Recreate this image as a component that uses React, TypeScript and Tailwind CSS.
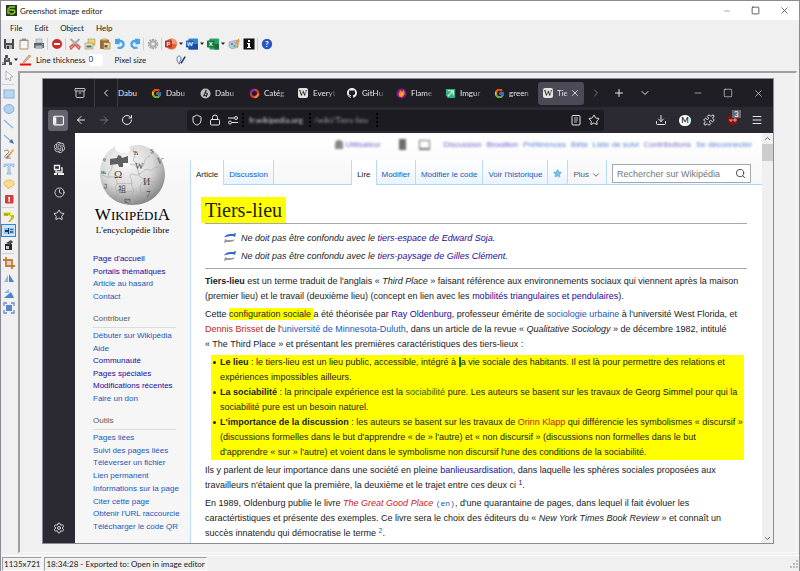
import type { ReactNode } from 'react';
import {
  Archive, ArrowLeft, ArrowRight, ChevronDown, ChevronLeft, ChevronRight, ChevronUp, Clock,
  Download, Lock, Menu, Minus, Plus, Puzzle, RotateCw, Search, Settings, Shield, Square, Star, X,
} from 'lucide-react';
import { FcGoogle } from 'react-icons/fc';
import { SiOpenai, SiGithub } from 'react-icons/si';

function Svg({ children, size = 12 }: { children: ReactNode; size?: number }) {
  return (
    <svg width={size} height={size} viewBox="0 0 12 12" fill="none" className="shrink-0">
      {children}
    </svg>
  );
}

/* ---------- Greenshot toolbar icons ---------- */

const SaveIcon = () => (
  <Svg>
    <path d="M1 1h10v10H2L1 10z" fill="#4a4a4e" />
    <path d="M3 1h6v4H3z" fill="#dfe3e8" />
    <path d="M3 7h6v4H3z" fill="#a9adb5" />
    <path d="M4 8h2v3H4z" fill="#3b3b3f" />
  </Svg>
);
const ClipboardIcon = () => (
  <Svg>
    <rect x="1.5" y="1.5" width="9" height="10" rx="1" fill="#b08a62" />
    <rect x="2.5" y="3" width="7" height="7.5" fill="#f4f6fa" />
    <rect x="4" y="0.5" width="4" height="2.2" fill="#8f959d" />
  </Svg>
);
const PrinterIcon = () => (
  <Svg>
    <path d="M3 1h6v4H3z" fill="#cfd8e4" stroke="#8a94a3" strokeWidth=".6" />
    <path d="M1 5h10v5H1z" fill="#5d636b" />
    <path d="M2.5 7.5h7V11h-7z" fill="#aeb6c1" />
    <path d="M9 6h1v1H9z" fill="#8be07a" />
  </Svg>
);
const StopIcon = () => (
  <Svg>
    <circle cx="6" cy="6" r="5" fill="#cf2a27" />
    <path d="M3 5h6v2H3z" fill="#fff" />
  </Svg>
);
const CutIcon = () => (
  <Svg>
    <path d="M1.5 1L9 8M10.5 1L3 8" stroke="#a6a6aa" strokeWidth="1.8" />
    <path d="M4 6l-3 3 1 2 4-4 4 4 1-2-3-3" stroke="#dd5a50" strokeWidth="1.5" />
  </Svg>
);
const CopyIcon = () => (
  <Svg>
    <path d="M4 1h7v6H4z" fill="#f6d262" stroke="#8a93a4" strokeWidth=".6" />
    <path d="M1 5h8v6H1z" fill="#fbe28b" stroke="#7f8ca0" strokeWidth=".6" />
    <path d="M2.5 7.5h5v2h-5z" fill="#3f6fb3" />
  </Svg>
);
const PasteIcon = () => (
  <Svg>
    <rect x="1" y="1.5" width="9" height="9.5" rx="1" fill="#9a6a38" />
    <path d="M3 .5h5v2H3z" fill="#d5b27a" />
    <path d="M4.5 4.5h6.5v6.5H4.5z" fill="#f3d57c" stroke="#806a44" strokeWidth=".6" />
    <path d="M5.5 7h3v2.5h-3z" fill="#4a5f86" />
  </Svg>
);
const UndoIcon = () => (
  <Svg>
    <path d="M4 3.500c4-1.500 6 1 5.500 3.500C9 9.500 6 10.500 3.500 9.500" stroke="#46a5e8" strokeWidth="2.400" />
    <path d="M1 1l5-.5-.5 6L1 6z" fill="#46a5e8" />
  </Svg>
);
const RedoIcon = () => (
  <Svg>
    <path d="M8 3.500C4 2 2 4.500 2.500 7c.5 2.500 3.500 3.500 6 2.500" stroke="#46a5e8" strokeWidth="2.400" />
    <path d="M11 1L6 .5l.5 6L11 6z" fill="#46a5e8" />
  </Svg>
);
const GearIcon = () => (
  <Svg>
    <circle cx="6" cy="6" r="4.5" stroke="#a3a3a6" strokeWidth="1.4" strokeDasharray="2 .8" />
    <circle cx="6" cy="6" r="3.3" fill="#c4c4c6" stroke="#9b9b9e" />
    <circle cx="6" cy="6" r="1.3" fill="#efefef" />
  </Svg>
);
const PowerPointIcon = () => (
  <Svg>
    <circle cx="6.5" cy="6" r="5.5" fill="#e2643c" />
    <path d="M6.5.5A5.5 5.5 0 0 1 12 6H6.5z" fill="#f09a76" />
    <rect x="0" y="2.5" width="7" height="7" rx=".8" fill="#b8371a" />
    <text x="1.5" y="8.2" fontSize="6" fontWeight="700" fill="#fff">P</text>
  </Svg>
);
const WordIcon = () => (
  <Svg>
    <rect x="2.5" y="0.5" width="9.5" height="11" rx=".8" fill="#2f87d8" />
    <path d="M2.5 6h9.5v5.5H2.5z" fill="#1a4f9f" />
    <rect x="0" y="2.5" width="7.5" height="7" rx=".8" fill="#1b5cbe" />
    <text x=".8" y="8.2" fontSize="6" fontWeight="700" fill="#fff">W</text>
  </Svg>
);
const ExcelIcon = () => (
  <Svg>
    <rect x="2.5" y="0.5" width="9.5" height="11" rx=".8" fill="#27a366" />
    <path d="M7.5 6h4.5v5.5H7.5z" fill="#176b3d" />
    <rect x="0" y="2.5" width="7.5" height="7" rx=".8" fill="#107c41" />
    <text x="1.7" y="8.2" fontSize="6" fontWeight="700" fill="#fff">X</text>
  </Svg>
);
const PaintIcon = () => (
  <Svg>
    <path d="M1 4l8-2 1 7-6 2-3-2z" fill="#a8cbe6" stroke="#78a1c5" strokeWidth=".6" />
    <circle cx="4" cy="6" r="1" fill="#d94c3a" />
    <circle cx="6.5" cy="8" r="1" fill="#58a846" />
    <path d="M7 6l4-5M9 10l2-8" stroke="#e7933b" strokeWidth="1.3" />
  </Svg>
);
const InfoIcon = () => (
  <Svg>
    <path d="M.5.5h11v11H.5z" fill="#111" />
    <path d="M5 2h2v2H5zM4 5h3v4h1v1H4V9h1V6H4z" fill="#fff" />
  </Svg>
);
const HelpIcon = () => (
  <Svg>
    <circle cx="6" cy="6" r="5.2" fill="#2c55c4" />
    <text x="4" y="9" fontSize="8" fontWeight="700" fill="#fff">?</text>
  </Svg>
);

function ToolButton({ label, children }: { label: string; children: ReactNode }) {
  return (
    <button aria-label={label} className="flex h-[15px] w-[15px] shrink-0 items-center justify-center">
      {children}
    </button>
  );
}

const Divider = () => <span className="mx-px h-3 w-px bg-[#cfcfcf]" />;

const Caret = () => (
  <svg width="6" height="4" viewBox="0 0 6 4" className="shrink-0"><path d="M1 0.5h4L3 3z" fill="#222" /></svg>
);

function TopBars() {
  return (
    <header>
      <div className="flex h-[19px] items-center bg-white pl-[5px]">
        <svg width="11" height="11" viewBox="0 0 11 11">
          <path d="M0 0h11v11H0z" fill="#2d3328" />
          <path d="M9 2H4L2 4v4h2M3 5h5l1 2-2 2H4" stroke="#86d815" strokeWidth="1.3" fill="none" />
        </svg>
        <h1 className="ml-[3px] flex-1">Greenshot image editor</h1>
        <button aria-label="Minimize" className="flex w-[29px] justify-center"><Minus size={8} color="#777" /></button>
        <button aria-label="Maximize" className="flex w-[29px] justify-center"><Square size={9} color="#333" /></button>
        <button aria-label="Close" className="flex w-[29px] justify-center"><X size={11} color="#333" strokeWidth={1.5} /></button>
      </div>
      <nav className="flex h-[15px] items-center gap-3 pl-[9px]">
        <button>File</button>
        <button>Edit</button>
        <button>Object</button>
        <button>Help</button>
      </nav>
      <div className="flex h-[17px] items-center">
        <ToolButton label="Save"><SaveIcon /></ToolButton>
        <ToolButton label="Copy to clipboard"><ClipboardIcon /></ToolButton>
        <ToolButton label="Print"><PrinterIcon /></ToolButton>
        <Divider />
        <ToolButton label="Delete"><StopIcon /></ToolButton>
        <Divider />
        <ToolButton label="Cut"><CutIcon /></ToolButton>
        <ToolButton label="Copy"><CopyIcon /></ToolButton>
        <ToolButton label="Paste"><PasteIcon /></ToolButton>
        <ToolButton label="Undo"><UndoIcon /></ToolButton>
        <ToolButton label="Redo"><RedoIcon /></ToolButton>
        <Divider />
        <ToolButton label="Settings"><GearIcon /></ToolButton>
        <Divider />
        <ToolButton label="PowerPoint"><PowerPointIcon /></ToolButton>
        <Caret />
        <ToolButton label="Word"><WordIcon /></ToolButton>
        <Caret />
        <ToolButton label="Excel"><ExcelIcon /></ToolButton>
        <Caret />
        <ToolButton label="Paint"><PaintIcon /></ToolButton>
        <ToolButton label="Imgur"><InfoIcon /></ToolButton>
        <Divider />
        <ToolButton label="Help"><HelpIcon /></ToolButton>
      </div>
      <div className="flex h-[16px] items-center">
        <button aria-label="Obfuscation mode" className="flex w-[18px] items-center">
          <Svg>
            <path d="M4 1h3v3h2v4h2v3H8V8H5v3H1V8h2V4h1z" fill="#555" />
            <path d="M5 4h2v2H5zM1 8h2v2H1z" fill="#aaa" />
          </Svg>
          <Caret />
        </button>
        <button aria-label="Line color" className="ml-px">
          <Svg>
            <path d="M3 8L9 1l2 1-7 7z" fill="#e2b184" stroke="#a9764c" strokeWidth=".5" />
            <path d="M0 9.5h11v2H0z" fill="#f00" />
          </Svg>
        </button>
        <label htmlFor="thickness" className="ml-1">Line thickness</label>
        <input id="thickness" defaultValue="0" className="ml-[3px] h-[12px] w-[14px] bg-white pb-[2px]" />
        <span className="ml-[12px]">Pixel size</span>
        <button aria-label="Blur" className="ml-[30px]">
          <Svg size={10}>
            <path d="M2 2c2-2 4 0 4 2S4 9 4 11C2 9 0 5 2 2z" stroke="#5b6f95" strokeWidth="1.2" />
            <path d="M11 2L6 10" stroke="#243e73" strokeWidth="2" />
          </Svg>
        </button>
      </div>
    </header>
  );
}

/* ---------- drawing tools on the left ---------- */

function DrawTools() {
  return (
    <div className="flex w-[17px] shrink-0 flex-col items-start">
      <ToolButton label="Select">
        <Svg><path d="M3 1v9l2-2 2 3 1-1-1-3h3z" fill="#fff" stroke="#999" strokeWidth=".7" /></Svg>
      </ToolButton>
      <span className="my-px ml-px h-px w-3 bg-[#cfcfcf]" />
      <ToolButton label="Rectangle">
        <Svg><rect x="1" y="2" width="10" height="8" fill="#bcd5ee" stroke="#88afd6" /></Svg>
      </ToolButton>
      <ToolButton label="Ellipse">
        <Svg><ellipse cx="6" cy="6" rx="5" ry="4.5" fill="#b3d0ec" stroke="#88afd6" /></Svg>
      </ToolButton>
      <ToolButton label="Line">
        <Svg><path d="M1 2l9 8" stroke="#8fb3da" strokeWidth="1.3" /></Svg>
      </ToolButton>
      <ToolButton label="Arrow">
        <Svg><path d="M1 2l7 6" stroke="#8fb3da" strokeWidth="1.3" /><path d="M6 9l5 2-2-5z" fill="#3f74ad" /></Svg>
      </ToolButton>
      <ToolButton label="Freehand">
        <Svg>
          <path d="M1 3c4-2 7 0 3 3s-3 5 4 4" stroke="#7c8b9b" />
          <path d="M4 8l6-7 1 1-5 7z" fill="#e0a23e" />
          <path d="M3 9l2-1 1 1-2 1z" fill="#c33" />
        </Svg>
      </ToolButton>
      <ToolButton label="Text">
        <Svg><path d="M1 1h10v3h-1L9 2.5H7V10h1v1H4v-1h1V2.5H3L2 4H1z" fill="#c2dbf2" stroke="#79a6d3" strokeWidth=".6" /></Svg>
      </ToolButton>
      <ToolButton label="Speech bubble">
        <Svg><path d="M6 2c3 0 5 1.500 5 3.500S9 9 7 9l-2 2V9C3 9 1 7.500 1 5.500S3 2 6 2z" fill="#fbdd8c" stroke="#d8a94b" strokeWidth=".7" /></Svg>
      </ToolButton>
      <ToolButton label="Counter">
        <Svg><rect x="2" y="2" width="8.5" height="8.5" rx="1" fill="#d93a3a" /><path d="M5 4h2v5H5.500V5H5z" fill="#fff" /></Svg>
      </ToolButton>
      <span className="my-px ml-px h-px w-3 bg-[#cfcfcf]" />
      <ToolButton label="Highlight">
        <Svg>
          <path d="M0 1h8v4H0z" fill="#f6ec2a" />
          <path d="M1 3h6M1 4h4" stroke="#6d6a2a" strokeWidth=".8" />
          <path d="M7 4h4v3l-4 4H5l3-4z" fill="#c5bd22" />
        </Svg>
      </ToolButton>
      <button aria-label="Obfuscate" className="flex h-[13px] w-[15px] items-center justify-center border border-[#2a8ad8] bg-[#cfe5f7]">
        <svg width="10" height="8" viewBox="0 0 10 8">
          <path d="M0 1h10v6H0z" fill="#8ec6ea" />
          <path d="M1 3h3V1h1v6H4V5H1z" fill="#173a63" />
          <path d="M6 2h3v1H6zM6 4h3v2H6z" fill="#3c70a8" />
        </svg>
      </button>
      <ToolButton label="Effects">
        <Svg>
          <path d="M2 5h7v6H2z" fill="#26282b" />
          <path d="M3 4l5-3 2 2-3 3z" fill="#4a4d50" />
          <path d="M3 7h3v3H3z" fill="#c7cbb8" />
        </Svg>
      </ToolButton>
      <span className="my-px ml-px h-px w-3 bg-[#cfcfcf]" />
      <ToolButton label="Crop">
        <Svg><path d="M3 0v9h9M0 3h9v9" stroke="#cc7a2c" strokeWidth="1.8" /><path d="M4 4h4v4H4z" fill="#cfd7e4" /></Svg>
      </ToolButton>
      <ToolButton label="Rotate left">
        <Svg><path d="M1 10l4-7v7z" fill="#8fb6e3" /><path d="M6 10V2l5 8z" fill="#4d82c9" /></Svg>
      </ToolButton>
      <ToolButton label="Rotate right">
        <Svg><path d="M1 6l5-4v4z" fill="#8fb6e3" /><path d="M1 11l7-6 3 6z" fill="#4d82c9" /></Svg>
      </ToolButton>
      <ToolButton label="Resize">
        <Svg>
          <path d="M3 3h6v6H3z" fill="#5488cf" />
          <path d="M1 4V1h3M8 1h3v3M11 8v3H8M4 11H1V8" stroke="#6a8cc0" strokeWidth="1.3" />
        </Svg>
      </ToolButton>
    </div>
  );
}

/* ---------- captured browser ---------- */

const WikiFavicon = () => (
  <span className="flex h-[10px] w-[10px] items-center justify-center rounded-[2px] bg-[#e4e4e4] font-['Liberation_Serif',serif] text-[9px] leading-none text-black">
    W
  </span>
);

const tabs: { title: string; icon: ReactNode }[] = [
  { title: 'Dabu', icon: <FcGoogle size={11} /> },
  {
    title: 'Dabu',
    icon: <Svg size={11}><circle cx="6" cy="6" r="5.5" fill="#bdbdbd" /><path d="M4 9L7 2M5 5l3 1-1 3-2-1" stroke="#222" strokeWidth="1.2" /></Svg>,
  },
  {
    title: 'Catég',
    icon: <Svg size={11}><circle cx="6" cy="6" r="4" stroke="#d93535" strokeWidth="2.5" /><path d="M6 2a4 4 0 0 0-4 4" stroke="#7b2bb0" strokeWidth="2.5" /><path d="M6 10a4 4 0 0 0 4-4" stroke="#e88a20" strokeWidth="2.5" /></Svg>,
  },
  { title: 'Everyt', icon: <WikiFavicon /> },
  { title: 'GitHu', icon: <SiGithub size={10} color="#f2f2f2" /> },
  {
    title: 'Flame',
    icon: <Svg size={11}><circle cx="6" cy="6" r="5.5" fill="#7d1694" /><path d="M3 8c-1-3 2-3 1-6 2 1 2 2 3 2l1-2c3 4 1 7-2 8-2 0-3-1-3-2z" fill="#f4801f" /><path d="M5 8c0-2 2-2 2-4 1 3 0 5-2 4z" fill="#ffd23c" /></Svg>,
  },
  {
    title: 'Imgur',
    icon: <Svg size={11}><path d="M1 1h10v10H3L1 8z" fill="#30b37f" /><path d="M3 3l6 0v5M3 9l5-5" stroke="#d8f5e8" strokeWidth="1.3" /></Svg>,
  },
  { title: 'green', icon: <FcGoogle size={11} /> },
];

function BrowserChrome() {
  return (
    <div className="text-[#e6e6ea]">
      <div className="flex h-[28px] items-center bg-[#1f1e25]">
        <button aria-label="Recent tabs" className="flex h-full w-[52px] shrink-0 items-center justify-end border-r border-[#3b3a43] pr-[8px]">
          <Archive size={12} color="#c4c4c8" />
        </button>
        <button aria-label="Scroll tabs left" className="flex h-full w-[23px] shrink-0 items-center justify-center border-r border-[#3b3a43]">
          <ChevronLeft size={12} />
        </button>
        <span className="w-[33px] shrink-0">Dabu</span>
        {tabs.map((t, i) => (
          <button key={i} className="flex w-[49px] shrink-0 items-center gap-1 whitespace-nowrap">
            <span className="w-[11px] shrink-0">{t.icon}</span>
            <span className="w-[24px] text-left [mask-image:linear-gradient(to_right,black_60%,transparent)]">{t.title}</span>
          </button>
        ))}
        <div className="-ml-[5px] flex h-[23px] w-[46px] shrink-0 items-center rounded-[3px] bg-[#4b4a56] pl-[5px]">
          <WikiFavicon />
          <span className="ml-1 w-[13px] [mask-image:linear-gradient(to_right,black_60%,transparent)]">Tie</span>
          <button aria-label="Close tab"><X size={10} /></button>
        </div>
        <button aria-label="Scroll tabs right" className="ml-[6px]"><ChevronRight size={12} color="#76757e" /></button>
        <button aria-label="New tab" className="ml-[11px]"><Plus size={12} /></button>
        <button aria-label="List all tabs" className="ml-[14px]"><ChevronDown size={12} /></button>
        <div className="ml-auto flex gap-[20px] pr-[9px]">
          <button aria-label="Minimize browser"><Minus size={10} strokeWidth={1.5} /></button>
          <button aria-label="Maximize browser"><Square size={10} strokeWidth={1.5} /></button>
          <button aria-label="Close browser"><X size={11} strokeWidth={1.5} /></button>
        </div>
      </div>
      <div className="flex h-[26px] items-center bg-[#2b2a33]">
        <button aria-label="Show sidebar" className="ml-[5px] flex h-[21px] w-[20px] items-center justify-center rounded-[3px] bg-[#65646f]">
          <Svg size={13}><rect x="1.5" y="2" width="9" height="8" rx="1" stroke="#fff" /><path d="M2 3h2v6H2z" fill="#fff" /></Svg>
        </button>
        <button aria-label="Back" className="ml-[7px]"><ArrowLeft size={12} /></button>
        <button aria-label="Forward" className="ml-[11px]"><ArrowRight size={12} color="#76757e" /></button>
        <button aria-label="Reload" className="ml-[11px]"><RotateCw size={12} /></button>
        <div className="ml-[54px] flex h-[21px] flex-1 items-center gap-[6px] rounded-[3px] bg-[#1c1b22] pl-[4px] pr-[4px]">
          <Shield size={12} />
          <Lock size={12} />
          <Svg size={12}><path d="M1 4h6M5 8.5h6" stroke="#e6e6ea" /><circle cx="9" cy="4" r="1.5" stroke="#e6e6ea" /><circle cx="3" cy="8.5" r="1.5" stroke="#e6e6ea" /></Svg>
          <div className="-ml-[3px] flex h-[14px] flex-1 items-center whitespace-nowrap">
            <div className="flex h-full w-[67px] items-center border-l-2 border-dotted border-black pl-[5px]">
              <span className="text-[#d7d7dc] blur-[1px]">fr.wikipedia.org</span>
            </div>
            <div className="flex h-full w-[69px] items-center border-x-2 border-dotted border-black pl-[3px]">
              <span className="text-[#9a99a1] blur-[1px]">/wiki/Tiers-lieu</span>
            </div>
          </div>
          <Svg size={12}><rect x="2" y="1.5" width="8" height="9.5" rx="1" stroke="#e6e6ea" /><path d="M4 4h4M4 6h4M4 8h3" stroke="#e6e6ea" strokeWidth=".8" /></Svg>
          <Star size={12} />
        </div>
        <div className="ml-[51px] flex w-[118px] items-center gap-3 pr-[10px]">
          <button aria-label="Downloads"><Download size={12} /></button>
          <button aria-label="Account" className="flex h-[11px] w-[12px] shrink-0 items-center justify-center rounded-full bg-white font-bold text-[#2b2a33]">M</button>
          <button aria-label="Extensions"><Puzzle size={12} /></button>
          <button aria-label="uBlock" className="relative">
            <Svg size={12}><path d="M6 1l5 1v5c0 2-3 4-5 4.500C4 11 1 9 1 7V2z" fill="#8b0f10" /><path d="M3 5v2h2V5M7 7h2V5H7z" stroke="#e8c9c9" strokeWidth=".8" /></Svg>
            <span className="absolute -top-[4px] left-[5px] bg-[#68686f] px-[2px] leading-[8px] text-white">3</span>
          </button>
          <button aria-label="Menu"><Menu size={12} /></button>
        </div>
      </div>
    </div>
  );
}

function BrowserSidebar() {
  return (
    <div className="flex w-[32px] shrink-0 flex-col items-center gap-[11px] bg-[#2b2a33] pb-[9px] pt-[9px] text-[#dcdce0]">
      <button aria-label="Chatbot"><SiOpenai size={11} /></button>
      <button aria-label="Synced tabs">
        <Svg>
          <path d="M1.5 1.5h5v4h-5z" stroke="#eee" strokeWidth="1.3" />
          <path d="M3 6v2h6V4H8" stroke="#eee" strokeWidth="1.3" />
          <path d="M1 9h3v2H1zM5 9h6v2H5z" fill="#eee" />
        </Svg>
      </button>
      <button aria-label="History"><Clock size={11} /></button>
      <button aria-label="Bookmarks"><Star size={12} /></button>
      <button aria-label="Customize" className="mt-auto"><Settings size={12} /></button>
    </div>
  );
}

/* ---------- Wikipédia ---------- */

function Globe() {
  return (
    <svg width="66" height="62" viewBox="0 0 66 62" fill="none">
      <defs>
        <radialGradient id="globe" cx=".4" cy=".3" r=".75">
          <stop offset="0" stopColor="#fafafa" />
          <stop offset=".55" stopColor="#d8d8d8" />
          <stop offset="1" stopColor="#7d7d7d" />
        </radialGradient>
      </defs>
      <path d="M16 2c-2 3 0 6 3 6 2 2 5 0 8 1 3 0 3-3 2-6 3-2 7-2 12-2 13 3 24 14 24 29 0 18-14 31-33 31S0 47 0 29C0 17 6 7 16 2z" fill="url(#globe)" />
      <path d="M10 15l7-1 1-3 3 1 1 2 6-2v7l-5 0 0 4-4 0-1-3-8 1z" fill="#5f5f5f" />
      <path d="M12 21c1 7-6 7-3 12 8-1 8 4 8 7 8-2 8 1 15-1 0-5-4-6-1-9 3-1 4 3 8 0-2-6-1-9-9-10M39 30c0 5 5 3 5 7-5 3-4 7-3 12M39 30c5-1 4-6 10-4 5 1 4-3 9-3M32 39c-2 5 4 5 1 9-2 5 1 9-1 12M17 40c-4 5 3 8-1 13M44 37c7-2 8 3 14 1M34 4c-3 4 3 5 0 10s7 5 8 9M42 23c4-4 1-9 8-11M1 32c3-2 5 2 8 1M16 47c7-3 9 3 16 0M41 49c5-2 7 2 12-1" stroke="#aaa" strokeWidth=".7" />
      <g fill="#454545" fontFamily="Liberation Serif, Noto Sans CJK JP, serif">
        <text x="14" y="34" fontSize="11">Ω</text>
        <text x="35" y="25" fontSize="9">W</text>
        <text x="43" y="41" fontSize="10">И</text>
        <text x="18" y="48" fontSize="8">祖</text>
        <text x="46" y="53" fontSize="9">7</text>
        <text x="57" y="20" fontSize="8">Ѵ</text>
        <text x="33" y="11" fontSize="7">Ћ</text>
        <text x="50" y="9" fontSize="7">Ş</text>
        <text x="3" y="17" fontSize="7">ę</text>
        <text x="1" y="30" fontSize="7">њ</text>
        <text x="24" y="58" fontSize="6">ლ</text>
        <text x="4" y="43" fontSize="6">უ</text>
      </g>
    </svg>
  );
}

function NavGroup({ title, links, listClass }: { title?: string; links: [string, boolean?][]; listClass: string }) {
  return (
    <div>
      {title && (
        <h3 className="mb-[2px] mr-[14px] border-b border-[#dcdcdc] pb-[2px] text-[#54595d]">{title}</h3>
      )}
      <ul className={listClass}>
        {links.map(([label, visited]) => (
          <li key={label}>
            <a href="#" className={visited ? 'text-[#1a0a9b]' : 'text-[#2058b8]'}>{label}</a>
          </li>
        ))}
      </ul>
    </div>
  );
}

function WikiSidebar() {
  return (
    <aside className="w-[115px] shrink-0 pt-[11px] font-['Liberation_Sans',Arial,sans-serif] leading-[12px]">
      <a href="#" className="flex w-[115px] flex-col items-center font-['Liberation_Serif',serif] text-black">
        <Globe />
        <span className="text-[17px] leading-[18px]">W<span className="text-[13px]">IKIPÉDI</span>A</span>
        <span className="text-[9px] leading-[10px]">L'encyclopédie libre</span>
      </a>
      <nav className="mt-[18px] flex flex-col gap-[10px] pl-[18px]">
        <NavGroup
          listClass="flex h-[50px] flex-col justify-between"
          links={[["Page d'accueil", true], ['Portails thématiques', true], ['Article au hasard'], ['Contact']]}
        />
        <NavGroup
          title="Contribuer"
          listClass="flex h-[75px] flex-col justify-between"
          links={[
            ['Débuter sur Wikipédia'], ['Aide'], ['Communauté', true], ['Pages spéciales', true],
            ['Modifications récentes', true], ['Faire un don'],
          ]}
        />
        <NavGroup
          title="Outils"
          listClass="flex h-[101px] flex-col justify-between"
          links={[
            ['Pages liées'], ['Suivi des pages liées'], ['Téléverser un fichier'], ['Lien permanent'],
            ['Informations sur la page'], ['Citer cette page'], ["Obtenir l'URL raccourcie"],
            ['Télécharger le code QR'],
          ]}
        />
      </nav>
    </aside>
  );
}

function PageTabs() {
  const tab = 'flex h-[24px] items-center border-r border-[#b9dcf4] bg-gradient-to-b from-white to-[#eaf4fc] px-[5px] pt-[6px] text-[#2058b8]';
  const open = 'flex h-[25px] items-center border-r border-[#b9dcf4] bg-white px-[5px] pt-[5px] text-[#202122]';
  return (
    <div className="flex h-[25px] items-start whitespace-nowrap border-b border-[#a7d7f9]">
      <div className="flex flex-1 items-start border-l border-[#b9dcf4] text-[8px]">
        <a href="#" className={open}>Article</a>
        <a href="#" className={tab}>Discussion</a>
        <div className="ml-auto flex items-start border-l border-[#b9dcf4]">
          <a href="#" className={open}>Lire</a>
          <a href="#" className={tab}>Modifier</a>
          <a href="#" className={tab}>Modifier le code</a>
          <a href="#" className={tab}>Voir l'historique</a>
          <a href="#" aria-label="Suivre" className={tab}>
            <Star size={9} fill="#79bdea" color="#5ba7dc" className="mb-1" />
          </a>
          <button className="flex h-[24px] items-center gap-[2px] border-r border-[#b9dcf4] px-[5px] pt-[6px] text-[8px] text-[#54595d]">
            Plus <ChevronDown size={10} />
          </button>
        </div>
      </div>
      <div className="ml-[5px] mr-[11px] mt-[4px] flex h-[19px] w-[139px] items-center border border-[#a2a9b1] bg-white px-1">
        <input aria-label="Rechercher" placeholder="Rechercher sur Wikipédia" className="min-w-0 flex-1 placeholder:text-[#72777d] focus:outline-none" />
        <button aria-label="Lancer la recherche"><Search size={11} color="#404244" /></button>
      </div>
    </div>
  );
}

function PersonalBar() {
  return (
    <div className="flex h-[27px] items-center justify-end gap-[5px] whitespace-nowrap pb-[4px] pr-[10px] text-[8px] text-[#5a82da]">
      <div className="flex items-center gap-[2px] text-[#7a68cc] blur-[1px]">
        <span className="h-[9px] w-[8px] rounded-t-full bg-[#888]" />
        <span className="w-[43px]">Utilisateur</span>
      </div>
      <span className="ml-[6px] h-[11px] w-[7px] bg-[#6d6d70] blur-[1px]" />
      <span className="ml-[8px] mr-[8px] h-[10px] w-[11px] border border-b-2 border-[#77777a] blur-[1px]" />
      <span className="text-[#7a68cc] blur-[1px]">Discussion</span>
      <span className="text-[#665cd0] blur-[1px]">Brouillon</span>
      <span className="blur-[1px]">Préférences</span>
      <span className="blur-[1px]">Bêta</span>
      <span className="blur-[1px]">Liste de suivi</span>
      <span className="text-[#7a68cc] blur-[1px]">Contributions</span>
      <span className="blur-[1px]">Se déconnecter</span>
    </div>
  );
}

function Hatnote({ children }: { children: ReactNode }) {
  return (
    <div className="flex h-[18px] items-center gap-[4px] pl-[18px] italic">
      <svg width="14" height="10" viewBox="0 0 14 10">
        <path d="M1 4.500C3 1 6 1 10 1l3-1-1 4-2-1C6 3 4 3.500 1 4.500z" fill="#3465c8" />
        <path d="M12 6.500C10 9 8 9 4 9l-3 1 1-4 2 1c4 0 5 0 8-.5z" fill="#9a9a9a" />
      </svg>
      <p>{children}</p>
    </div>
  );
}

const Seen = ({ children }: { children: ReactNode }) => <a href="#" className="text-[#1a0a9b]">{children}</a>;
const Link = ({ children }: { children: ReactNode }) => <a href="#" className="text-[#2058b8]">{children}</a>;
const Missing = ({ children }: { children: ReactNode }) => <a href="#" className="text-[#c8201c]">{children}</a>;

const Bullet = ({ children }: { children: ReactNode }) => (
  <li className="before:-ml-[7px] before:mr-[4px] before:inline-block before:h-[3px] before:w-[3px] before:rounded-full before:bg-[#202122] before:align-middle">
    {children}
  </li>
);

function Article() {
  return (
    <article className="flex-1 border-l border-[#b9dcf4] bg-white pb-[2px] pl-[14px] pr-[15px] pt-[12px]">
      <div className="border-b border-[#a2a9b1]">
        <h2 className="-ml-[4px] w-fit bg-[#ff0] px-[4px] font-['Liberation_Serif',Georgia,serif] text-[20px] leading-[26px]">Tiers-lieu</h2>
      </div>
      <div className="border-b border-[#a2a9b1] pb-[3px] pt-[5px]">
        <Hatnote>Ne doit pas être confondu avec le <Seen>tiers-espace de Edward Soja</Seen>.</Hatnote>
        <Hatnote>Ne doit pas être confondu avec le <Seen>tiers-paysage de Gilles Clément</Seen>.</Hatnote>
      </div>
      <div className="flex flex-col gap-[3px] whitespace-nowrap pt-[5px] leading-[15px]">
        <p>
          <b>Tiers-lieu</b> est un terme traduit de l'anglais « <i>Third Place</i> » faisant référence aux environnements sociaux qui viennent après la maison<br />
          (premier lieu) et le travail (deuxième lieu) (concept en lien avec les <Seen>mobilités triangulaires et pendulaires</Seen>).
        </p>
        <p>
          Cette <mark className="bg-[#ff0] py-px text-[#202122]">configuration sociale </mark>a été théorisée par <Seen>Ray Oldenburg</Seen>, professeur émérite de <Link>sociologie urbaine</Link> à l'université West Florida, et<br />
          <Missing>Dennis Brisset</Missing> de l'<Link>université de Minnesota-Duluth</Link>, dans un article de la revue « <i>Qualitative Sociology</i> » de décembre 1982, intitulé<br />
          « The Third Place » et présentant les premières caractéristiques des tiers-lieux :
        </p>
        <ul className="ml-[6px] mr-[3px] bg-[#ff0] pl-[9px]">
          <Bullet>
            <b>Le lieu</b> : le tiers-lieu est un lieu public, accessible, intégré à <span className="bg-[#0a8a1a] text-[#0a5a1a]">l</span>a vie sociale des habitants. Il est là pour permettre des relations et<br />
            expériences impossibles ailleurs.
          </Bullet>
          <Bullet>
            <b>La sociabilité</b> : la principale expérience est la <a href="#" className="text-[#1f6410]">sociabilité</a> pure. Les auteurs se basent sur les travaux de <a href="#" className="text-[#100a00]">Georg Simmel</a> pour qui la<br />
            sociabilité pure est un besoin naturel.
          </Bullet>
          <Bullet>
            <b>L'importance de la discussion</b> : les auteurs se basent sur les travaux de <Missing>Orinn Klapp</Missing> qui différencie les symbolismes « discursif »<br />
            (discussions formelles dans le but d'apprendre « de » l'autre) et « non discursif » (discussions non formelles dans le but<br />
            d'apprendre « sur » l'autre) et voient dans le symbolisme non discursif l'une des conditions de la sociabilité.
          </Bullet>
        </ul>
        <p>
          Ils y parlent de leur importance dans une société en pleine <Seen>banlieusardisation</Seen>, dans laquelle les sphères sociales proposées aux<br />
          travailleurs n'étaient que la première, la deuxième et le trajet entre ces deux ci <sup className="text-[7px] leading-none"><Seen>1</Seen></sup>.
        </p>
        <p>
          En 1989, Oldenburg publie le livre <i><Missing>The Great Good Place</Missing></i> <a href="#" className="font-['Liberation_Mono',monospace] text-[8px] leading-none text-[#2058b8]">(en)</a>, d'une quarantaine de pages, dans lequel il fait évoluer les<br />
          caractértistiques et présente des exemples. Ce livre sera le choix des éditeurs du « <i>New York Times Book Review</i> » et connaît un<br />
          succès innatendu qui démocratise le terme <sup className="text-[7px] leading-none"><Link>2</Link></sup>.
        </p>
      </div>
    </article>
  );
}

export default function App() {
  return (
    <div className="flex min-h-screen flex-col border border-[#8b8a98] bg-[#f0f0f0] font-[Lato,'Noto_Sans',sans-serif] text-[8px] leading-[12px] text-[#1a1a1a]">
      <TopBars />
      <main className="flex flex-1 pr-[2px]">
        <DrawTools />
        <div className="mt-[3px] min-w-0 flex-1 border-l-2 border-t-2 border-[#a0a0a0] border-b border-r border-b-[#fafafa] border-r-[#fafafa] pb-[8px] pl-[22px] pr-[22px] pt-[5px]">
          <div className="overflow-hidden border border-[#8b8a98]">
            <BrowserChrome />
            <div className="flex">
              <BrowserSidebar />
              <div className="flex min-w-0 flex-1 bg-[#f6f6f6] bg-[linear-gradient(white,#f6f6f6)] bg-[length:100%_54px] bg-no-repeat">
                <WikiSidebar />
                <div className="flex min-w-0 flex-1 flex-col font-['Liberation_Sans',Arial,sans-serif] text-[9px] text-[#202122]">
                  <PersonalBar />
                  <PageTabs />
                  <Article />
                </div>
              </div>
              <div className="flex w-[11px] shrink-0 flex-col items-center bg-[#f0f0f0] text-[#444]">
                <ChevronUp size={9} className="my-px" />
                <div className="h-[17px] w-full bg-[#cdcdcd]" />
                <ChevronDown size={9} className="mt-auto" />
              </div>
            </div>
          </div>
        </div>
      </main>
      <footer className="mt-[2px] flex h-[16px] items-center gap-[2px] border-t border-white px-px">
        <span className="border border-b-white border-l-[#a0a0a0] border-r-white border-t-[#a0a0a0] px-px">1135x721</span>
        <span className="border border-b-white border-l-[#a0a0a0] border-r-white border-t-[#a0a0a0] px-px">18:34:28 - Exported to: Open in image editor</span>
        <svg width="8" height="8" viewBox="0 0 8 8" className="ml-auto">
          <path d="M6 0h2v2H6zM3 3h2v2H3zM6 3h2v2H6zM0 6h2v2H0zM3 6h2v2H3zM6 6h2v2H6z" fill="#bdbdbd" />
        </svg>
      </footer>
    </div>
  );
}
